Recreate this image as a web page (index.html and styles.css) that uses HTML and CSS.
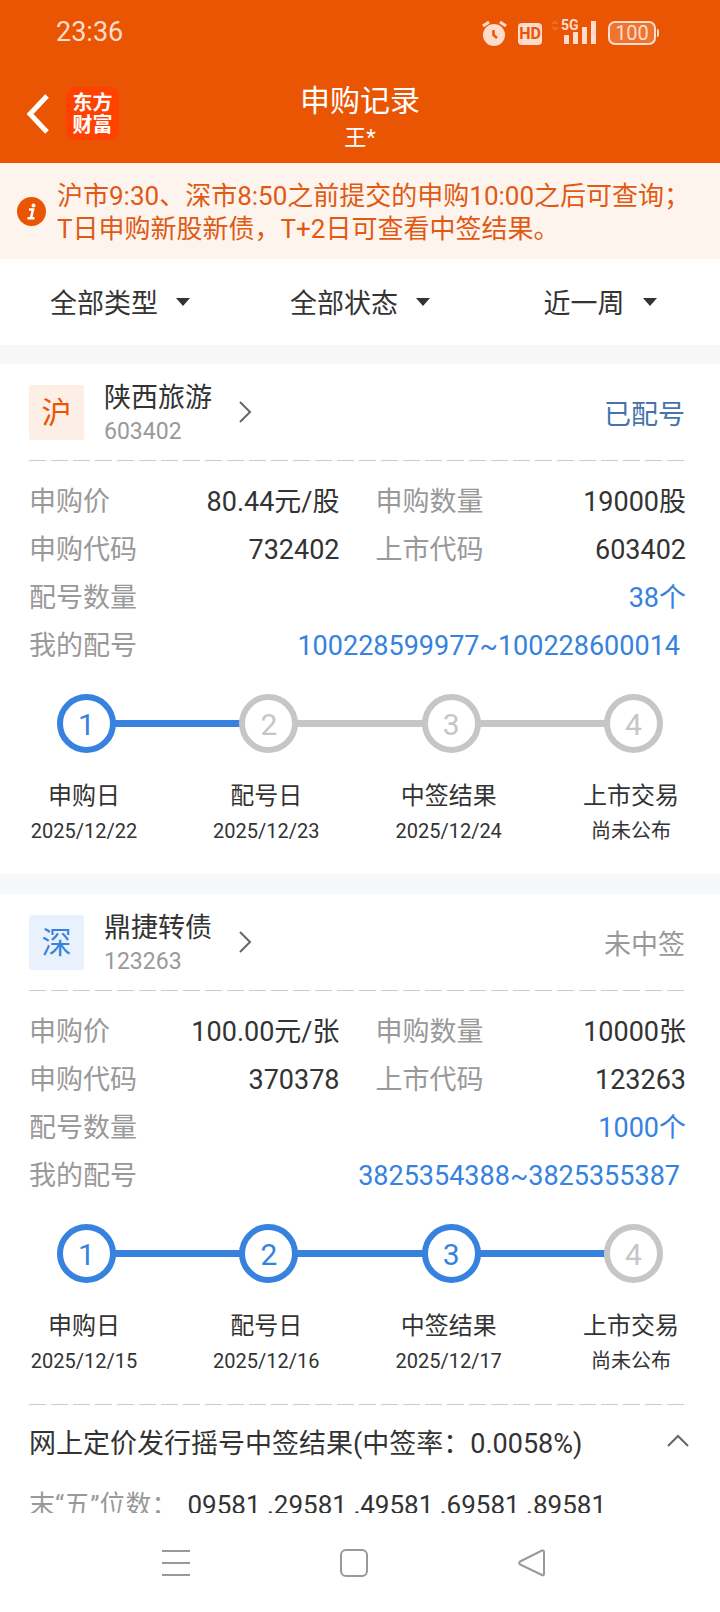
FILE: index.html
```
<!DOCTYPE html>
<html lang="zh-CN">
<head>
    <meta charset="utf-8">
    <meta name="viewport" content="width=device-width, initial-scale=1">
    <title>申购记录</title>
    <link rel="stylesheet" href="styles.css">
</head>
<body>
    <header class="header">
        <div class="statusbar">
            <span class="clock">23:36</span>
            <svg class="status-icons" width="180" height="30" viewBox="0 0 180 30">
                <!-- alarm -->
                <g fill="none" stroke="#fddccb" stroke-width="3">
                    <path d="M3 9 L9 5 M26 9 L20 5"/>
                </g>
                <circle cx="14" cy="18" r="11" fill="#fddccb"/>
                <path d="M13.500 13 V18 L17 21" fill="none" stroke="#ea5504" stroke-width="2.500"/>
                <!-- hd -->
                <rect x="38" y="6" width="24" height="22" rx="4" fill="#fddccb"/>
                <text class="hd" x="50" y="22" text-anchor="middle">HD</text>
                <!-- signal -->
                <path d="M71 7 L75 3 L79 7 Z M71 10 L75 14 L79 10 Z" fill="#ee6a25"/>
                <text class="net" x="81" y="13">5G</text>
                <path d="M84 18 h5 v9 h-5 Z M93 15 h5 v12 h-5 Z M102 10 h5 v17 h-5 Z M111 4 h5 v23 h-5 Z" fill="#fddccb"/>
                <!-- battery -->
                <rect x="129" y="5" width="46" height="22" rx="6" fill="#ee7430" stroke="#fddccb" stroke-width="2"/>
                <path d="M177 12 q2 0 2 2 v4 q0 2 -2 2 Z" fill="#fddccb"/>
                <text class="power" x="152" y="23" text-anchor="middle">100</text>
            </svg>
        </div>
        <div class="navbar">
            <div class="navbar-left">
                <button class="back" aria-label="返回">
                    <svg width="24" height="42" viewBox="0 0 24 42">
                        <path d="M22 3 L5 21 L22 39" fill="none" stroke="#fff" stroke-width="5"/>
                    </svg>
                </button>
                <a class="logo" href="#">东方<br>财富</a>
            </div>
            <div class="title">
                <h1>申购记录</h1>
                <p>王*</p>
            </div>
        </div>
    </header>

    <main class="content">
        <div class="notice">
            <svg width="29" height="29" viewBox="0 0 29 29">
                <circle cx="14.500" cy="14.500" r="14.500" fill="#ea5504"/>
                <circle cx="16.500" cy="8.500" r="2" fill="#fff"/>
                <path d="M12 12.500 H16 L14 21 M10.500 21.200 H17.500" fill="none" stroke="#fff" stroke-width="2.500"/>
            </svg>
            <p>沪市9:30、深市8:50之前提交的申购10:00之后可查询；<br>T日申购新股新债，T+2日可查看中签结果。</p>
        </div>

        <div class="filters">
            <label class="filter">
                <select aria-label="类型">
                    <option>全部类型</option>
                    <option>新股</option>
                    <option>新债</option>
                </select>
            </label>
            <label class="filter">
                <select aria-label="状态">
                    <option>全部状态</option>
                    <option>已配号</option>
                    <option>未中签</option>
                </select>
            </label>
            <label class="filter">
                <select aria-label="时间">
                    <option>近一周</option>
                    <option>近一月</option>
                    <option>近一年</option>
                </select>
            </label>
        </div>

        <section class="card">
            <div class="card-head">
                <span class="market market-sh">沪</span>
                <a class="stock" href="#">
                    <span class="names">
                        <span class="name">陕西旅游</span>
                        <span class="code">603402</span>
                    </span>
                    <svg width="14" height="24" viewBox="0 0 14 24">
                        <path d="M2 2 L12 12 L2 22" fill="none" stroke="#666" stroke-width="2"/>
                    </svg>
                </a>
                <span class="state state-done">已配号</span>
            </div>
            <hr class="dash">
            <dl class="info">
                <div><dt>申购价</dt><dd>80.44元/股</dd></div>
                <div><dt>申购数量</dt><dd>19000股</dd></div>
                <div><dt>申购代码</dt><dd>732402</dd></div>
                <div><dt>上市代码</dt><dd>603402</dd></div>
                <div class="wide"><dt>配号数量</dt><dd><a href="#">38个</a></dd></div>
                <div class="wide range"><dt>我的配号</dt><dd><a href="#">100228599977~100228600014</a></dd></div>
            </dl>
            <div class="track">
                <span class="dot on">1</span>
                <span class="line on"></span>
                <span class="dot">2</span>
                <span class="line"></span>
                <span class="dot">3</span>
                <span class="line"></span>
                <span class="dot">4</span>
            </div>
            <ol class="steps">
                <li><b>申购日</b><span>2025/12/22</span></li>
                <li><b>配号日</b><span>2025/12/23</span></li>
                <li><b>中签结果</b><span>2025/12/24</span></li>
                <li><b>上市交易</b><span>尚未公布</span></li>
            </ol>
        </section>

        <section class="card">
            <div class="card-head">
                <span class="market market-sz">深</span>
                <a class="stock" href="#">
                    <span class="names">
                        <span class="name">鼎捷转债</span>
                        <span class="code">123263</span>
                    </span>
                    <svg width="14" height="24" viewBox="0 0 14 24">
                        <path d="M2 2 L12 12 L2 22" fill="none" stroke="#666" stroke-width="2"/>
                    </svg>
                </a>
                <span class="state">未中签</span>
            </div>
            <hr class="dash">
            <dl class="info">
                <div><dt>申购价</dt><dd>100.00元/张</dd></div>
                <div><dt>申购数量</dt><dd>10000张</dd></div>
                <div><dt>申购代码</dt><dd>370378</dd></div>
                <div><dt>上市代码</dt><dd>123263</dd></div>
                <div class="wide"><dt>配号数量</dt><dd><a href="#">1000个</a></dd></div>
                <div class="wide range"><dt>我的配号</dt><dd><a href="#">3825354388~3825355387</a></dd></div>
            </dl>
            <div class="track">
                <span class="dot on">1</span>
                <span class="line on"></span>
                <span class="dot on">2</span>
                <span class="line on"></span>
                <span class="dot on">3</span>
                <span class="line on"></span>
                <span class="dot">4</span>
            </div>
            <ol class="steps">
                <li><b>申购日</b><span>2025/12/15</span></li>
                <li><b>配号日</b><span>2025/12/16</span></li>
                <li><b>中签结果</b><span>2025/12/17</span></li>
                <li><b>上市交易</b><span>尚未公布</span></li>
            </ol>
            <hr class="dash">
            <button class="result-toggle">
                <span>网上定价发行摇号中签结果(中签率：0.0058%)</span>
                <svg width="24" height="14" viewBox="0 0 24 14">
                    <path d="M2 12 L12 2 L22 12" fill="none" stroke="#666" stroke-width="2"/>
                </svg>
            </button>
            <p class="result"><span>末“五”位数：</span>09581 .29581 .49581 .69581 .89581</p>
        </section>
    </main>

    <nav class="sysnav">
        <button aria-label="最近任务">
            <svg width="28" height="28" viewBox="0 0 28 28">
                <path d="M0 2 H28 M0 14 H28 M0 26 H28"/>
            </svg>
        </button>
        <button aria-label="主页">
            <svg width="28" height="28" viewBox="0 0 28 28">
                <rect x="1" y="1" width="26" height="26" rx="5"/>
            </svg>
        </button>
        <button aria-label="后退">
            <svg width="28" height="28" viewBox="0 0 28 28">
                <path d="M2 12.500 L24 1.500 Q26 1 26 3 V25 Q26 27 24 26 L2 15.500 Q0.500 14 2 12.500 Z"/>
            </svg>
        </button>
    </nav>
</body>
</html>
```

FILE: styles.css
```
* {
    box-sizing: border-box;
}

body {
    display: flex;
    flex-direction: column;
    height: 100vh;
    margin: 0;
    background-color: #fff;
    color: #333;
    font-family: Roboto, "Noto Sans CJK SC", sans-serif;
    font-size: 27px;
}

h1, p, dl, dd, ol {
    margin: 0;
    padding: 0;
}

a {
    color: inherit;
    text-decoration: none;
}

button, select {
    padding: 0;
    border: none;
    background: none;
    color: inherit;
    font: inherit;
    cursor: pointer;
}

svg {
    display: block;
    flex-shrink: 0;
}

/* header */
.header {
    flex-shrink: 0;
    background-color: #ea5504;
    color: #fff;
}

.statusbar {
    display: flex;
    justify-content: space-between;
    align-items: center;
    height: 64px;
    padding: 0 60px 0 56px;
}

.clock {
    color: #fddccb;
    font-size: 27px;
}

.hd {
    fill: #ea5504;
    font-size: 16px;
    font-weight: bold;
}

.net {
    fill: #fddccb;
    font-size: 14px;
    font-weight: bold;
}

.power {
    fill: #fddccb;
    font-size: 20px;
}

.navbar {
    display: grid;
    grid-template-columns: 1fr auto 1fr;
    height: 99px;
    padding: 0 25px;
}

.navbar-left {
    display: flex;
    align-items: center;
    gap: 17px;
}

.logo {
    width: 53px;
    height: 53px;
    padding-top: 5px;
    border-radius: 9px;
    background-color: #ff4200;
    font-size: 20px;
    font-weight: bold;
    line-height: 22px;
    text-align: center;
}

.title {
    padding-top: 17px;
    text-align: center;
}

.title h1 {
    font-size: 30px;
    font-weight: normal;
    line-height: 40px;
}

.title p {
    font-size: 22px;
    line-height: 34px;
}

/* notice and filters */
.content {
    flex: 1;
    overflow: hidden;
}

.notice {
    display: flex;
    align-items: center;
    gap: 11px;
    height: 96px;
    padding-left: 17px;
    background-color: #fef4ee;
    color: #e05a14;
    font-size: 26px;
    line-height: 33px;
    white-space: nowrap;
}

.notice p {
    padding-top: 4px;
}

.filters {
    display: grid;
    grid-template-columns: repeat(3, 1fr);
    height: 86px;
}

.filter {
    display: flex;
    justify-content: center;
    align-items: center;
    gap: 18px;
}

.filter select {
    padding-top: 4px;
    appearance: none;
}

.filter::after {
    content: "";
    border: 7px solid transparent;
    border-top: 8px solid #333;
    border-bottom: none;
}

/* cards */
.card {
    border-top: 19px solid #f6f7f9;
}

.card + .card {
    border-top-width: 20px;
}

.card-head {
    display: flex;
    align-items: center;
    height: 96px;
    padding: 0 35px 0 29px;
}

.market {
    width: 55px;
    border-radius: 3px;
    font-size: 30px;
    line-height: 55px;
    text-align: center;
}

.market-sh {
    background-color: #fdeee6;
    color: #ea5504;
}

.market-sz {
    background-color: #e9f2fc;
    color: #3682de;
}

.stock {
    display: flex;
    align-items: center;
    gap: 26px;
    margin-left: 20px;
}

.names {
    padding-top: 4px;
}

.name, .code {
    display: block;
    line-height: 36px;
}

.code {
    color: #999;
    font-size: 23px;
    line-height: 32px;
}

.state {
    margin-left: auto;
    color: #999;
}

.state-done {
    color: #4673aa;
}

.dash {
    height: 1px;
    margin: 0 34px 0 29px;
    border: none;
    background: repeating-linear-gradient(to right, #ccc 0 17px, transparent 17px 22px);
}

.info {
    display: grid;
    grid-template-columns: 1fr 1fr;
    column-gap: 36px;
    padding: 17px 34px 0 29px;
    line-height: 48px;
}

.info div {
    display: flex;
    justify-content: space-between;
}

.info .wide {
    grid-column: span 2;
}

.info .range {
    padding-right: 6px;
}

.info dt {
    color: #999;
}

.info a {
    color: #3682de;
}

/* progress */
.track {
    display: flex;
    align-items: center;
    padding: 24px 57px 0;
}

.dot {
    width: 59px;
    height: 59px;
    border: 6px solid #c6c6c6;
    border-radius: 50%;
    color: #c6c6c6;
    font-size: 30px;
    line-height: 50px;
    text-align: center;
}

.line {
    flex: 1;
    height: 7px;
    margin: 0 -1px;
    background-color: #c6c6c6;
}

.dot.on {
    border-color: #3682de;
    color: #3682de;
}

.line.on {
    background-color: #3682de;
}

.steps {
    display: flex;
    justify-content: space-between;
    padding: 25px 33px 26px 28px;
    list-style: none;
    text-align: center;
}

.steps li {
    width: 112px;
}

.steps b {
    display: block;
    font-size: 24px;
    font-weight: normal;
    line-height: 36px;
}

.steps span {
    display: block;
    font-size: 20px;
    line-height: 34px;
}

/* lottery result */
.result-toggle {
    display: flex;
    justify-content: space-between;
    align-items: center;
    width: 100%;
    height: 72px;
    padding: 0 30px 0 29px;
}

.result {
    padding: 6px 0 0 29px;
    font-size: 26px;
    line-height: 44px;
    white-space: nowrap;
}

.result span {
    margin-right: 10px;
    color: #999;
}

/* system navigation */
.sysnav {
    display: flex;
    flex-shrink: 0;
    justify-content: center;
    align-items: center;
    gap: 150px;
    height: 99px;
    padding-right: 12px;
    background-color: #fff;
}

.sysnav svg {
    fill: none;
    stroke: #999;
    stroke-width: 2;
}
```
